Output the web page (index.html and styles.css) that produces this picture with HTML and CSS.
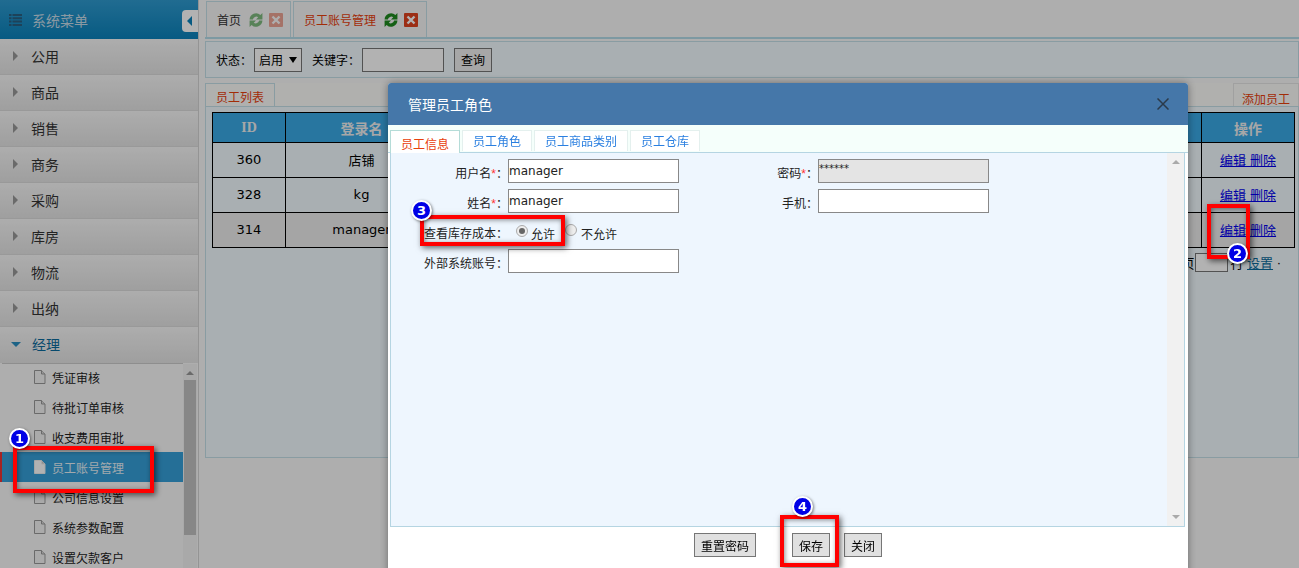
FILE: index.html
```html
<!DOCTYPE html>
<html lang="zh-CN">
<head>
  <meta charset="UTF-8">
  <title>员工账号管理</title>
  <link rel="stylesheet" href="styles.css">
</head>
<body>
  <div class="sidebar">
    <div class="side-title">
      <svg class="list-icon" width="13" height="12" viewBox="0 0 13 12"><path d="M0 0h2.500v2H0zM3.500 0H13v2H3.500zM0 3.300h2.500v2H0zM3.500 3.300H13v2H3.500zM0 6.600h2.500v2H0zM3.500 6.600H13v2H3.500zM0 9.900h2.500V12H0zM3.500 9.900H13V12H3.500z" fill="#2a5f80"/></svg>
      <span>系统菜单</span>
      <i class="collapse"></i>
    </div>
    <div class="group"><i class="arrow"></i>公用</div>
    <div class="group"><i class="arrow"></i>商品</div>
    <div class="group"><i class="arrow"></i>销售</div>
    <div class="group"><i class="arrow"></i>商务</div>
    <div class="group"><i class="arrow"></i>采购</div>
    <div class="group"><i class="arrow"></i>库房</div>
    <div class="group"><i class="arrow"></i>物流</div>
    <div class="group"><i class="arrow"></i>出纳</div>
    <div class="group open"><i class="arrow-down"></i>经理</div>
    <div class="sub-wrap">
      <div class="sub-list">
        <div class="sub-item"><svg class="doc" viewBox="0 0 13 14"><path d="M1.500.5h7l3.500 3.500v9.500h-10.500z" fill="#f4f4f4" stroke="#999"/><path d="M8.500.5v3.500h3.500" fill="#ddd" stroke="#999"/></svg>凭证审核</div>
        <div class="sub-item"><svg class="doc" viewBox="0 0 13 14"><path d="M1.500.5h7l3.500 3.500v9.500h-10.500z" fill="#f4f4f4" stroke="#999"/><path d="M8.500.5v3.500h3.500" fill="#ddd" stroke="#999"/></svg>待批订单审核</div>
        <div class="sub-item"><svg class="doc" viewBox="0 0 13 14"><path d="M1.500.5h7l3.500 3.500v9.500h-10.500z" fill="#f4f4f4" stroke="#999"/><path d="M8.500.5v3.500h3.500" fill="#ddd" stroke="#999"/></svg>收支费用审批</div>
        <div class="sub-item active"><svg class="doc" viewBox="0 0 13 14"><path d="M1.500.5h7l3.500 3.500v9.500h-10.500z" fill="#fff" stroke="#eee"/><path d="M8.500.5v3.500h3.500" fill="#ccc" stroke="#eee"/></svg>员工账号管理</div>
        <div class="sub-item"><svg class="doc" viewBox="0 0 13 14"><path d="M1.500.5h7l3.500 3.500v9.500h-10.500z" fill="#f4f4f4" stroke="#999"/><path d="M8.500.5v3.500h3.500" fill="#ddd" stroke="#999"/></svg>公司信息设置</div>
        <div class="sub-item"><svg class="doc" viewBox="0 0 13 14"><path d="M1.500.5h7l3.500 3.500v9.500h-10.500z" fill="#f4f4f4" stroke="#999"/><path d="M8.500.5v3.500h3.500" fill="#ddd" stroke="#999"/></svg>系统参数配置</div>
        <div class="sub-item"><svg class="doc" viewBox="0 0 13 14"><path d="M1.500.5h7l3.500 3.500v9.500h-10.500z" fill="#f4f4f4" stroke="#999"/><path d="M8.500.5v3.500h3.500" fill="#ddd" stroke="#999"/></svg>设置欠款客户</div>
      </div>
      <div class="side-scroll"><i class="up"></i><div class="thumb"></div></div>
    </div>
  </div>

  <div class="main">
    <div class="tabs">
      <div class="tab">首页
        <svg class="refresh" viewBox="1 1 12 12"><path d="M1.500 6.500a5.500 5.500 0 0 1 9.300-3.700L12.500 1v5.500H7l1.900-1.900A3 3 0 0 0 4.300 6.500zM12.500 7.500a5.500 5.500 0 0 1-9.300 3.700L1.500 13V7.500H7l-1.900 1.900A3 3 0 0 0 9.700 7.500z" fill="#1f8a1f"/></svg>
        <span class="tab-close"><svg viewBox="0 0 14 14"><path d="M3.500 3.500l7 7M10.500 3.500l-7 7" stroke="#fff" stroke-width="2.400"/></svg></span>
      </div>
      <div class="tab current">员工账号管理
        <svg class="refresh" viewBox="1 1 12 12"><path d="M1.500 6.500a5.500 5.500 0 0 1 9.300-3.700L12.500 1v5.500H7l1.900-1.900A3 3 0 0 0 4.300 6.500zM12.500 7.500a5.500 5.500 0 0 1-9.300 3.700L1.500 13V7.500H7l-1.900 1.900A3 3 0 0 0 9.700 7.500z" fill="#1f8a1f"/></svg>
        <span class="tab-close"><svg viewBox="0 0 14 14"><path d="M3.500 3.500l7 7M10.500 3.500l-7 7" stroke="#fff" stroke-width="2.400"/></svg></span>
      </div>
    </div>
    <div class="toolbar">
      <label>状态：</label>
      <div class="select">启用<i></i></div>
      <label class="kw">关键字：</label>
      <input class="kw-input" type="text">
      <button class="btn query">查询</button>
    </div>
    <div class="list-head">
      <div class="list-tab">员工列表</div>
      <div class="add-tab">添加员工</div>
    </div>
    <div class="panel">
      <table class="grid">
        <tr><th class="c-id">ID</th><th class="c-name">登录名</th><th></th><th class="c-op">操作</th></tr>
        <tr><td>360</td><td>店铺</td><td></td><td><a href="#">编辑 </a><a href="#">删除</a></td></tr>
        <tr><td>328</td><td>kg</td><td></td><td><a href="#">编辑 </a><a href="#">删除</a></td></tr>
        <tr class="hover"><td>314</td><td>manager</td><td></td><td><a href="#">编辑 </a><a href="#">删除</a></td></tr>
      </table>
      <div class="pager">页<input class="page-size" type="text">行 <a href="#">设置</a> ·</div>
    </div>
  </div>

  <div class="overlay"></div>

  <div class="modal">
    <div class="modal-head">管理员工角色
      <svg class="modal-x" width="12" height="12" viewBox="0 0 12 12"><path d="M.5.500l11 11M11.500.500l-11 11" stroke="#2b3a4a" stroke-width="1.500"/></svg>
    </div>
    <div class="modal-tabs">
      <div class="mtab current">员工信息</div>
      <div class="mtab">员工角色</div>
      <div class="mtab">员工商品类别</div>
      <div class="mtab">员工仓库</div>
    </div>
    <div class="modal-body">
      <div class="form">
        <div class="f-label">用户名<em>*</em>：</div>
        <input class="f-input" type="text" value="manager">
        <div class="f-label">密码<em>*</em>：</div>
        <input class="f-input locked" type="text" value="******">

        <div class="f-label">姓名<em>*</em>：</div>
        <input class="f-input" type="text" value="manager">
        <div class="f-label">手机：</div>
        <input class="f-input" type="text">

        <div class="f-label">查看库存成本：</div>
        <div class="radios">
          <i class="radio on"></i><span class="r-first">允许</span>
          <i class="radio off"></i><span>不允许</span>
        </div>

        <div class="f-label">外部系统账号：</div>
        <input class="f-input" type="text">
      </div>
      <div class="body-scroll"><i class="up"></i><i class="down"></i></div>
    </div>
    <div class="modal-foot">
      <button class="btn reset">重置密码</button>
      <button class="btn">保存</button>
      <button class="btn">关闭</button>
    </div>
  </div>

  <div class="mark mark1"></div>
  <div class="mark mark2"></div>
  <div class="mark mark3"></div>
  <div class="mark mark4"></div>
  <div class="badge badge1">1</div>
  <div class="badge badge2">2</div>
  <div class="badge badge3">3</div>
  <div class="badge badge4">4</div>
</body>
</html>
```

FILE: styles.css
```css
* {
  box-sizing: border-box;
}

html, body {
  height: 100%;
}

body {
  margin: 0;
  display: flex;
  overflow: hidden;
  background: #f6f6f6;
  color: #000;
  font-family: "Liberation Sans", "Noto Sans CJK SC", sans-serif;
  font-size: 13px;
}

/* 左侧菜单 */
.sidebar {
  width: 199px;
  flex: none;
  height: 100%;
  overflow: hidden;
  background: #fafafa;
  border-right: 1px solid #d5d5d5;
}

.side-title {
  height: 39px;
  display: flex;
  align-items: center;
  padding-left: 9px;
  color: #c8dce8;
  font-size: 14px;
  background: linear-gradient(#2f9bd0, #0b82bb);
  position: relative;
}

.list-icon {
  margin-right: 10px;
}

.collapse {
  position: absolute;
  right: 0;
  top: 10px;
  width: 16px;
  height: 22px;
  background: #fff;
  border-radius: 4px 0 0 4px;
}

.collapse::after {
  content: "";
  position: absolute;
  left: 5px;
  top: 6px;
  border: 5px solid transparent;
  border-left: 0;
  border-right-color: #0b82bb;
}

.group {
  height: 36px;
  display: flex;
  align-items: center;
  padding: 0 0 2px 13px;
  font-size: 14px;
  color: #333;
  background: linear-gradient(#f8f8f8, #e4e4e4);
  border-bottom: 1px solid #dcdcdc;
}

.group.open {
  color: #0b6a9c;
  border-bottom: 0;
}

.arrow {
  width: 0;
  height: 0;
  margin-right: 13px;
  border: 5px solid transparent;
  border-right: 0;
  border-left: 5px solid #999;
}

.arrow-down {
  width: 0;
  height: 0;
  margin-right: 11px;
  margin-left: -2px;
  border: 5px solid transparent;
  border-bottom: 0;
  border-top: 5px solid #2a8ec0;
}

.sub-wrap {
  display: flex;
  margin-left: 2px;
  border-top: 1px solid #ccc;
  margin-right: 15px;
  position: relative;
}

.sub-list {
  flex: 1;
  margin: -2px 0 0 -2px;
}

.sub-item {
  height: 30px;
  display: flex;
  align-items: center;
  padding-left: 33px;
  font-size: 12px;
  color: #222;
}

.sub-item.active {
  background: #359fd8;
  color: #e8f2f8;
  border-left: 2px solid #e33;
  padding-left: 31px;
}

.doc {
  width: 13px;
  height: 14px;
  margin-right: 6px;
  flex: none;
}

.side-scroll {
  position: absolute;
  right: -14px;
  top: 0;
  width: 14px;
  height: 210px;
  background: #f2f2f2;
}

.side-scroll .up {
  display: block;
  margin: 7px auto 0;
  width: 0;
  border: 4px solid transparent;
  border-top: 0;
  border-bottom: 4px solid #999;
}

.thumb {
  position: absolute;
  left: 1px;
  top: 16px;
  width: 12px;
  height: 155px;
  background: #c2c2c2;
}

/* 右侧内容 */
.main {
  flex: 1;
  min-width: 0;
  padding: 1px 0 0 6px;
  background: #fafafa;
}

.tabs {
  display: flex;
  gap: 2px;
  height: 38px;
  border-bottom: 2px solid #b3dce8;
  padding-left: 1px;
}

.tab {
  height: 36px;
  display: flex;
  align-items: center;
  padding: 0 7px 0 10px;
  color: #333;
  font-size: 12px;
  border: 1px solid #c5e0e8;
  border-bottom: 0;
  background: #f6f6f6;
}

.tab .refresh {
  opacity: .55;
}

.tab .tab-close {
  opacity: .45;
}

.tab.current {
  color: #e8400c;
  padding-right: 8px;
}

.tab.current .refresh, .tab.current .tab-close {
  opacity: 1;
}

.refresh {
  width: 14px;
  height: 14px;
  margin-left: 8px;
}

.tab-close {
  width: 14px;
  height: 14px;
  margin-left: 6px;
  background: #e0431f;
  border-radius: 1px;
  display: block;
}

.tab-close svg {
  display: block;
}

.toolbar {
  height: 37px;
  margin-top: 2px;
  display: flex;
  align-items: center;
  padding-left: 10px;
  font-size: 12px;
  background: #f2fbff;
  border: 1px solid #c5e0e8;
}

.select {
  width: 48px;
  height: 24px;
  display: flex;
  align-items: center;
  justify-content: space-between;
  padding: 0 4px;
  margin-left: 2px;
  background: #fff;
  border: 1px solid #767676;
  font-size: 12px;
}

.select i {
  border: 4px solid transparent;
  border-bottom: 0;
  border-top: 6px solid #000;
}

.kw {
  margin-left: 10px;
}

.kw-input {
  width: 82px;
  height: 24px;
  margin-left: 2px;
  border: 1px solid #767676;
  background: #fff;
}

.btn {
  height: 24px;
  padding: 0 6px;
  font-family: inherit;
  font-size: 12px;
  color: #000;
  background: #ececec;
  border: 1px solid #767676;
}

.query {
  margin-left: 10px;
  width: 38px;
  background: #efefef;
}

.list-head {
  display: flex;
  justify-content: space-between;
  height: 23px;
  margin-top: 5px;
  background: #fcfcfa;
}

.list-tab {
  width: 70px;
  border: 1px solid #c5e0e8;
  border-bottom: 0;
  color: #e8400c;
  font-size: 12px;
  text-align: center;
  line-height: 29px;
  overflow: hidden;
}

.add-tab {
  width: 66px;
  border: 1px solid #e5e5e5;
  border-bottom: 0;
  color: #e8400c;
  font-size: 12px;
  text-align: center;
  line-height: 32px;
  overflow: hidden;
}

.panel {
  height: 352px;
  padding: 5px 3px 0 6px;
  background: #f2fbff;
  border: 1px solid #c5e0e8;
}

.grid {
  width: 100%;
  table-layout: fixed;
  border-collapse: collapse;
}

.grid th, .grid td {
  border: 1px solid #000;
  text-align: center;
}

.grid th {
  height: 30px;
  background: #3aa9e6;
  color: #f0f0f0;
  font-family: "Liberation Serif", "Noto Sans CJK SC", serif;
  font-size: 14px;
}

.grid td {
  height: 35px;
  padding-bottom: 2px;
  font-family: "DejaVu Sans", "Noto Sans CJK SC", sans-serif;
  font-size: 13px;
}

.grid a {
  color: #0000ee;
}

.hover td {
  background: #ededed;
}

.c-id {
  width: 73px;
}

.c-name {
  width: 152px;
}

.c-op {
  width: 93px;
}

.pager {
  display: flex;
  justify-content: flex-end;
  align-items: center;
  margin-top: 5px;
  padding-right: 14px;
  height: 19px;
  white-space: pre;
  font-size: 13px;
}

.pager a {
  color: #0b6a9c;
}

.page-size {
  width: 33px;
  height: 19px;
  margin: 0 2px 0 1px;
  border: 1px solid #767676;
  background: #fff;
}

/* 遮罩和对话框 */
.overlay {
  position: fixed;
  inset: 0;
  background: rgba(0, 0, 0, .3);
}

.modal {
  position: fixed;
  left: 388px;
  top: 83px;
  width: 800px;
  height: 540px;
  background: #fff;
  border-radius: 3px 3px 0 0;
  box-shadow: 0 0 8px rgba(0, 0, 0, .4);
}

.modal-head {
  height: 42px;
  padding-left: 20px;
  display: flex;
  align-items: center;
  justify-content: space-between;
  color: #fff;
  font-size: 14px;
  background: #4577a9;
  border-radius: 3px 3px 0 0;
}

.modal-x {
  margin-right: 19px;
}

.modal-tabs {
  height: 28px;
  padding: 5px 0 0 2px;
  display: flex;
  gap: 3px;
  background: #f5fffb;
  border-bottom: 1px solid #b5d5e2;
}

.mtab {
  height: 21px;
  padding: 0 10px;
  color: #2a7fe0;
  font-size: 12px;
  line-height: 22px;
  background: #fff;
  border: 1px solid #e4f0ee;
  border-bottom: 0;
}

.mtab.current {
  height: 23px;
  width: 70px;
  margin-right: -1px;
  color: #e8400c;
  line-height: 28px;
  border-color: #b5dcd8;
  overflow: hidden;
}

.mtab + .mtab + .mtab {
  margin-left: -1px;
}

.modal-body {
  position: relative;
  height: 374px;
  margin: 0 3px 0 2px;
  background: #eef6fe;
  border: 1px solid #b5d5e2;
  border-top: 0;
}

.form {
  display: grid;
  grid-template-columns: 117px 171px 139px 171px;
  grid-auto-rows: 24px;
  row-gap: 6px;
  align-items: center;
  padding-top: 6px;
  font-size: 12px;
  color: #222;
}

.f-label {
  text-align: right;
  padding-top: 3px;
  white-space: nowrap;
}

.f-label em {
  color: #f33;
  font-style: normal;
}

.f-input {
  width: 171px;
  height: 24px;
  padding: 0;
  font-family: "DejaVu Sans", sans-serif;
  font-size: 12px;
  color: #222;
  background: #fff;
  border: 1px solid #888;
}

.locked {
  background: #e4e4e4;
  font-size: 10px;
  padding-bottom: 5px;
}

.radios {
  grid-column: 2 / 5;
  display: flex;
  align-items: center;
  margin-left: 8px;
  height: 24px;
}

.radios span {
  padding-top: 4px;
}

.r-first {
  margin: 0 10px 0 3px;
}

.radio {
  width: 12px;
  height: 12px;
  border-radius: 50%;
  border: 1px solid #aaa;
  background: #eee;
  position: relative;
}

.radio.on::after {
  content: "";
  position: absolute;
  left: 2px;
  top: 2px;
  width: 6px;
  height: 6px;
  border-radius: 50%;
  background: #666;
}

.radio.off {
  margin: 0 4px 2px 0;
}

.body-scroll {
  position: absolute;
  right: 0;
  top: 0;
  bottom: 0;
  width: 17px;
  background: #f1f1f1;
}

.body-scroll .up, .body-scroll .down {
  position: absolute;
  left: 5px;
  width: 0;
  border: 4px solid transparent;
}

.body-scroll .up {
  top: 7px;
  border-top: 0;
  border-bottom: 4px solid #aaa;
}

.body-scroll .down {
  bottom: 7px;
  border-bottom: 0;
  border-top: 4px solid #aaa;
}

.modal-foot {
  display: flex;
  justify-content: center;
  gap: 14px;
  padding-top: 6px;
}

.reset {
  margin-right: 22px;
}

.modal-foot .btn {
  background: #e0e0e0;
}

/* 教程标注 */
.mark {
  position: fixed;
  border: 4px solid #f00;
  box-shadow: 2px 2px 6px rgba(0, 0, 0, .6), inset 1px 1px 5px rgba(0, 0, 0, .45);
}

.mark1 {
  left: 13px;
  top: 446px;
  width: 141px;
  height: 47px;
}

.mark2 {
  left: 1207px;
  top: 204px;
  width: 43px;
  height: 55px;
}

.mark3 {
  left: 420px;
  top: 215px;
  width: 145px;
  height: 31px;
}

.mark4 {
  left: 780px;
  top: 515px;
  width: 59px;
  height: 52px;
}

.badge {
  position: fixed;
  width: 21px;
  height: 21px;
  border-radius: 50%;
  background: #0000e6;
  border: 2px solid #fff;
  box-shadow: 1px 1px 3px rgba(0, 0, 0, .5);
  color: #fff;
  font-family: "DejaVu Sans", sans-serif;
  font-size: 13px;
  font-weight: bold;
  line-height: 17px;
  text-align: center;
}

.badge1 {
  left: 9px;
  top: 428px;
}

.badge2 {
  left: 1227px;
  top: 243px;
}

.badge3 {
  left: 411px;
  top: 200px;
}

.badge4 {
  left: 792px;
  top: 496px;
}
```
